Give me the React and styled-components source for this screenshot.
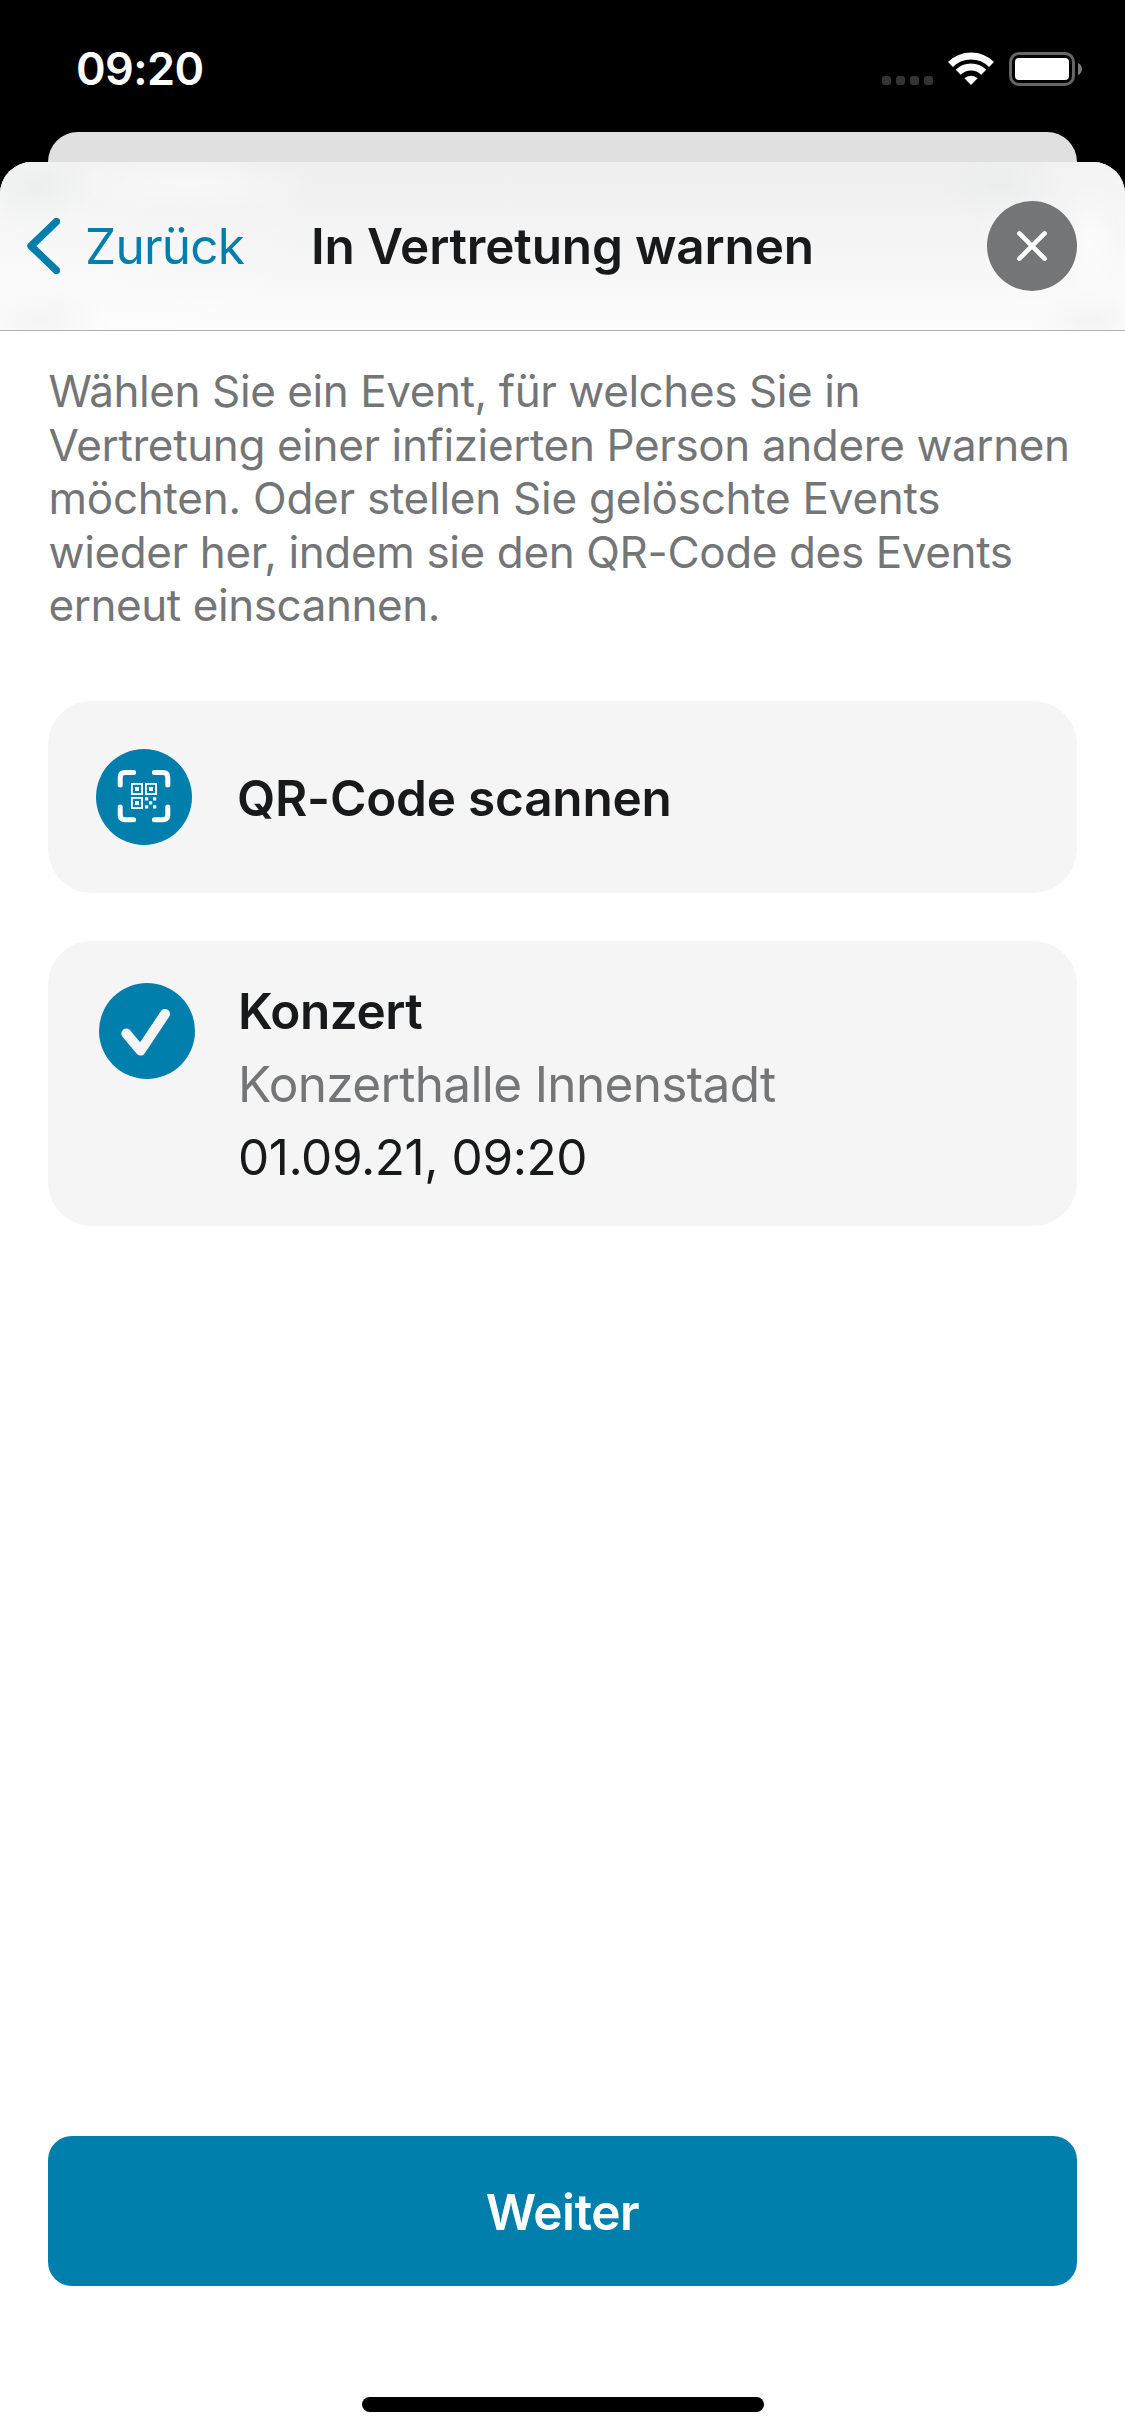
import React from "react";
import styled, { createGlobalStyle } from "styled-components";

const color = {
  accent: "#007fad",
  text: "#17191a",
  muted: "#747577",
  card: "#f5f5f5",
};

const GlobalStyle = createGlobalStyle`
  * { box-sizing: border-box; }
  svg { display: block; }
  body {
    margin: 0;
    background: #000;
    font-family: Inter, "Liberation Sans", sans-serif;
  }
`;

const Screen = styled.div`
  width: 1125px;
  height: 2436px;
  display: flex;
  flex-direction: column;
  background: #000;
  overflow: hidden;
`;

const StatusBar = styled.div`
  height: 132px;
  flex: none;
  display: flex;
  justify-content: space-between;
  align-items: flex-start;
  padding: 41px 43px 0 76px;
`;

const Time = styled.span`
  font-size: 45px;
  line-height: 55px;
  font-weight: 600;
  letter-spacing: -0.6px;
  color: #fff;
`;

const StatusIcons = styled.div`
  display: flex;
  gap: 15px;
  margin-top: 11px;
`;

const SignalDots = styled.div`
  display: flex;
  align-items: flex-end;
  gap: 5px;
  height: 33px;
`;

const Dot = styled.span`
  width: 9px;
  height: 9px;
  border-radius: 3px;
  background: #333434;
`;

const SheetBehind = styled.div`
  flex: none;
  height: 30px;
  margin: 0 48px;
  border-radius: 30px 30px 0 0;
  background: #e0e0e0;
`;

const Sheet = styled.div`
  flex: 1;
  display: flex;
  flex-direction: column;
  border-radius: 32px 32px 0 0;
  background: #fff;
  overflow: hidden;
`;

const NavBar = styled.header`
  flex: none;
  height: 169px;
  display: grid;
  grid-template-columns: 1fr auto 1fr;
  align-items: center;
  padding: 0 48px;
  border-bottom: 1px solid #b2b2b3;
  background:
    radial-gradient(60px 40px at 35px 25px, rgba(225, 229, 229, 0.4), rgba(225, 229, 229, 0)),
    radial-gradient(120px 30px at 190px 22px, rgba(255, 255, 255, 0.5), rgba(255, 255, 255, 0)),
    radial-gradient(60px 40px at 1000px 20px, rgba(228, 230, 230, 0.4), rgba(228, 230, 230, 0)),
    radial-gradient(30px 60px at 1090px 80px, rgba(255, 255, 255, 0.6), rgba(255, 255, 255, 0)),
    radial-gradient(60px 30px at 1090px 160px, rgba(238, 238, 238, 0.6), rgba(238, 238, 238, 0)),
    radial-gradient(70px 40px at 40px 160px, rgba(240, 240, 240, 0.6), rgba(240, 240, 240, 0)),
    linear-gradient(90deg, rgba(255, 255, 255, 0.35), rgba(255, 255, 255, 0) 30%, rgba(255, 255, 255, 0) 85%, rgba(255, 255, 255, 0.3)),
    linear-gradient(180deg, #efefef 0%, #f2f2f2 30%, #f6f6f6 60%, #fcfcfc 100%);
`;

const BackButton = styled.button`
  display: flex;
  align-items: center;
  justify-self: start;
  gap: 25px;
  margin-left: -21px;
  padding: 0;
  border: 0;
  background: none;
  font: 400 49.5px/60px Inter, "Liberation Sans", sans-serif;
  letter-spacing: -0.75px;
  color: ${color.accent};
`;

const Title = styled.h1`
  margin: 0;
  font-size: 49.5px;
  line-height: 60px;
  font-weight: 600;
  letter-spacing: -0.16px;
  color: ${color.text};
`;

const CloseButton = styled.button`
  justify-self: end;
  width: 90px;
  height: 90px;
  display: grid;
  place-items: center;
  padding: 0;
  border: 0;
  border-radius: 50%;
  background: ${color.muted};
`;

const Content = styled.main`
  flex: 1;
  display: flex;
  flex-direction: column;
  padding: 34px 48px 0;
`;

const Intro = styled.p`
  margin: 0 0 68px;
  padding-left: 0.5px;
  font-size: 44px;
  line-height: 53.6px;
  color: ${color.muted};
`;

const IntroLine = styled.span`
  display: block;
  white-space: nowrap;
  letter-spacing: ${(p) => p.$spacing}px;
`;

const Card = styled.section`
  display: flex;
  align-items: ${(p) => (p.$top ? "flex-start" : "center")};
  height: ${(p) => p.$height}px;
  padding-left: ${(p) => (p.$top ? 51 : 48)}px;
  margin-bottom: 48px;
  border-radius: 44px;
  background: ${color.card};
`;

const Badge = styled.span`
  flex: none;
  width: 96px;
  height: 96px;
  margin-top: ${(p) => p.$offset || 0}px;
  border-radius: 50%;
  background: ${color.accent};
`;

const CardLabel = styled.strong`
  margin-left: 45px;
  padding-top: 2px;
  font-size: 49.5px;
  line-height: 60px;
  font-weight: 600;
  letter-spacing: -0.22px;
  color: ${color.text};
`;

const EventInfo = styled.div`
  display: flex;
  flex-direction: column;
  gap: 1px;
  margin-left: 43px;
  padding-top: 34px;
`;

const EventLine = styled.span`
  font-size: 49.5px;
  line-height: 72px;
  font-weight: ${(p) => (p.$strong ? 600 : 400)};
  letter-spacing: ${(p) => p.$spacing}px;
  color: ${(p) => (p.$muted ? color.muted : color.text)};
`;

const PrimaryButton = styled.button`
  height: 150px;
  margin-top: auto;
  padding: 2px 0 0;
  border: 0;
  border-radius: 24px;
  background: ${color.accent};
  font: 600 49.5px/60px Inter, "Liberation Sans", sans-serif;
  letter-spacing: -0.4px;
  color: #fff;
`;

const HomeArea = styled.div`
  flex: none;
  height: 150px;
  display: flex;
  justify-content: center;
  align-items: flex-end;
  padding-bottom: 24px;
`;

const HomeIndicator = styled.span`
  width: 402px;
  height: 15px;
  border-radius: 7.5px;
  background: #000;
`;

const WifiIcon = () => (
  <svg width="46" height="34" viewBox="0 0 46 34" fill="none">
    <path d="M2.5 12.5A29 29 0 0 1 43.5 12.5" stroke="#fff" strokeWidth="7" />
    <path d="M10.27 20.27A18 18 0 0 1 35.73 20.27" stroke="#fff" strokeWidth="7" />
    <path d="M16.4 26.3A9.6 9.6 0 0 1 29.6 26.3L23 33Z" fill="#fff" />
  </svg>
);

const BatteryIcon = () => (
  <svg width="73" height="34" viewBox="0 0 73 34" fill="none">
    <rect x="1.5" y="1.5" width="63" height="31" rx="8.5" stroke="#666" strokeWidth="3" />
    <rect x="6" y="6" width="54" height="22" rx="4" fill="#fff" />
    <path d="M69 11C74.3 13 74.3 21 69 23Z" fill="#7d7d7d" />
  </svg>
);

const BackIcon = () => (
  <svg width="33" height="56" viewBox="0 0 33 56" fill="none">
    <path d="M29.5 3.5L4 28L29.5 52.5" stroke={color.accent} strokeWidth="7.4" strokeLinecap="round" strokeLinejoin="round" />
  </svg>
);

const CloseIcon = () => (
  <svg width="30" height="30" viewBox="0 0 30 30">
    <path d="M2.4 2.4L27.6 27.6M27.6 2.4L2.4 27.6" stroke="#fff" strokeWidth="4.6" strokeLinecap="round" />
  </svg>
);

const finders = [[35, 34], [49, 34], [35, 48]];
const modules = [[49, 48.3], [57, 48.3], [53, 52.3], [49, 56.3], [57, 56.3]];

const QrScanIcon = () => (
  <svg width="96" height="96" viewBox="0 0 96 96" fill="none">
    <path
      d="M24.2 36V28.5Q24.2 23.6 29 23.6H37.6M58.4 23.6H66.8Q71.8 23.6 71.8 28.5V36M71.8 58V66Q71.8 70.8 66.8 70.8H58.4M37.6 70.8H29Q24.2 70.8 24.2 66V58"
      stroke="#fff"
      strokeWidth="5"
      strokeLinecap="round"
    />
    {finders.map(([x, y]) => (
      <React.Fragment key={`${x}-${y}`}>
        <rect x={x + 0.9} y={y + 0.9} width="10.2" height="10.2" stroke="#fff" strokeWidth="1.8" />
        <rect x={x + 4} y={y + 4} width="4" height="4" fill="#fff" />
      </React.Fragment>
    ))}
    {modules.map(([x, y]) => (
      <rect key={`${x}-${y}`} x={x} y={y} width="3.2" height="3.2" fill="#fff" />
    ))}
  </svg>
);

const CheckIcon = () => (
  <svg width="96" height="96" viewBox="0 0 96 96" fill="none">
    <path d="M27.3 50.5L41.6 67.6L66 31" stroke={color.card} strokeWidth="10" strokeLinecap="round" strokeLinejoin="round" />
  </svg>
);

const introLines = [
  ["Wählen Sie ein Event, für welches Sie in", -0.42],
  ["Vertretung einer infizierten Person andere warnen", -0.38],
  ["möchten. Oder stellen Sie gelöschte Events", -0.25],
  ["wieder her, indem sie den QR-Code des Events", -0.37],
  ["erneut einscannen.", -0.44],
];

export default function App() {
  return (
    <Screen>
      <GlobalStyle />
      <StatusBar>
        <Time>09:20</Time>
        <StatusIcons>
          <SignalDots>
            <Dot />
            <Dot />
            <Dot />
            <Dot />
          </SignalDots>
          <WifiIcon />
          <BatteryIcon />
        </StatusIcons>
      </StatusBar>
      <SheetBehind />
      <Sheet>
        <NavBar>
          <BackButton>
            <BackIcon />
            Zurück
          </BackButton>
          <Title>In Vertretung warnen</Title>
          <CloseButton aria-label="Schließen">
            <CloseIcon />
          </CloseButton>
        </NavBar>
        <Content>
          <Intro>
            {introLines.map(([line, spacing]) => (
              <IntroLine key={line} $spacing={spacing}>
                {line}
              </IntroLine>
            ))}
          </Intro>
          <Card $height={192}>
            <Badge>
              <QrScanIcon />
            </Badge>
            <CardLabel>QR-Code scannen</CardLabel>
          </Card>
          <Card $height={285} $top>
            <Badge $offset={42}>
              <CheckIcon />
            </Badge>
            <EventInfo>
              <EventLine $strong $spacing={-0.5}>Konzert</EventLine>
              <EventLine $muted $spacing={-0.65}>Konzerthalle Innenstadt</EventLine>
              <EventLine $spacing={-0.42}>01.09.21, 09:20</EventLine>
            </EventInfo>
          </Card>
          <PrimaryButton>Weiter</PrimaryButton>
        </Content>
        <HomeArea>
          <HomeIndicator />
        </HomeArea>
      </Sheet>
    </Screen>
  );
}
